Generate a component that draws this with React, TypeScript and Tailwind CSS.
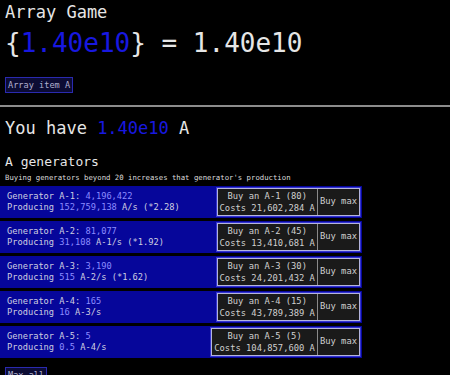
import React from 'react';

type Gen = {
  tier: number;
  amount: string;
  rate: string;
  produces: string;
  mult?: string;
  bought: number;
  cost: string;
};

const gens: Gen[] = [
  { tier: 1, amount: '4,196,422', rate: '152,759,138', produces: 'A', mult: '2.28', bought: 80, cost: '21,602,284' },
  { tier: 2, amount: '81,077', rate: '31,108', produces: 'A-1', mult: '1.92', bought: 45, cost: '13,410,681' },
  { tier: 3, amount: '3,190', rate: '515', produces: 'A-2', mult: '1.62', bought: 30, cost: '24,201,432' },
  { tier: 4, amount: '165', rate: '16', produces: 'A-3', bought: 15, cost: '43,789,389' },
  { tier: 5, amount: '5', rate: '0.5', produces: 'A-4', bought: 5, cost: '104,857,600' },
];

function GeneratorRow({ g }: { g: Gen }) {
  return (
    <div className="flex items-center justify-between h-[32px] mb-[3px] bg-[#06069a] pl-[7px] pr-[2px] w-[362px]">
      <div className="text-[8.7px] leading-[10.7px] text-[#cfcfe0]">
        <div>
          Generator A-{g.tier}: <span className="text-[#8c8cff]">{g.amount}</span>
        </div>
        <div>
          Producing <span className="text-[#8c8cff]">{g.rate}</span> {g.produces}/s
          {g.mult && <> (*{g.mult})</>}
        </div>
      </div>
      <div className="flex h-[28px] border border-[#b4b4dc] bg-[#1a1a1a] ring-1 ring-[#3434d0] text-[8.8px] text-[#d0d0d0]">
        <button className="px-[2px] leading-[12.5px] text-center whitespace-nowrap border-r border-[#8a8a8a]">
          <div>Buy an A-{g.tier} ({g.bought})</div>
          <div>Costs {g.cost} A</div>
        </button>
        <button className="px-[2px] whitespace-nowrap">Buy max</button>
      </div>
    </div>
  );
}

export default function App() {
  return (
    <div
      className="min-h-screen bg-black text-[#e6e6e6] overflow-hidden"
      style={{ fontFamily: '"DejaVu Sans Mono", "Liberation Mono", monospace' }}
    >
      <div className="px-[5px] pt-[2px]">
        <h1 className="text-[17px] leading-[20px]">Array Game</h1>
        <div className="text-[26px] leading-[30px] mt-[6px]">
          {'{'}
          <span className="text-[#1818e0]">1.40e10</span>
          {'}'} = 1.40e10
        </div>
        <button className="mt-[19px] h-[16px] px-[2px] border border-[#2a2ab0] bg-[#0c0c34] text-[8.6px] text-[#b0b0d0] leading-[14px]">
          Array item A
        </button>
      </div>
      <div className="mt-[10px] h-[2px] bg-[#8c8c8c]" />
      <div className="px-[5px] pt-[10px]">
        <div className="text-[17px] leading-[22px]">
          You have <span className="text-[#1818e0]">1.40e10</span> A
        </div>
        <h2 className="text-[13px] leading-[18px] mt-[14px]">A generators</h2>
        <p className="text-[7.3px] leading-[10px] mt-[2px] text-[#dcdcdc]">
          Buying generators beyond 20 increases that generator's production
        </p>
      </div>
      <div className="mt-[3px]">
        {gens.map((g) => (
          <GeneratorRow key={g.tier} g={g} />
        ))}
      </div>
      <div className="px-[5px] mt-[1px]">
        <button className="h-[16px] px-[2px] border border-[#2a2ab0] bg-[#0c0c34] text-[8.6px] text-[#b0b0d0] leading-[14px]">
          Max all
        </button>
      </div>
    </div>
  );
}
